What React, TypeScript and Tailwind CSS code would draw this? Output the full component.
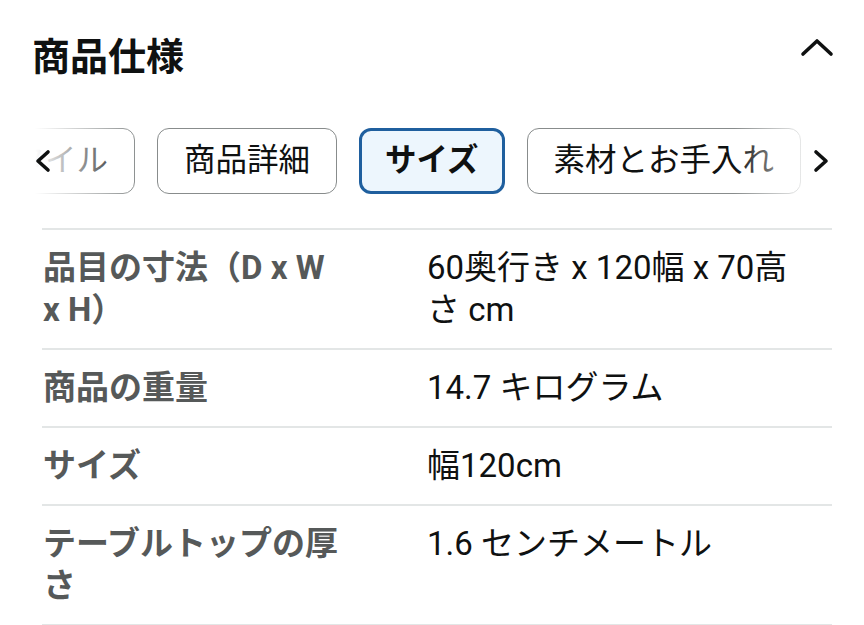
import React from "react";

const rows: { label: string; value: string }[] = [
  { label: "品目の寸法（D x W x H）", value: "60奥行き x 120幅 x 70高さ cm" },
  { label: "商品の重量", value: "14.7 キログラム" },
  { label: "サイズ", value: "幅120cm" },
  { label: "テーブルトップの厚さ", value: "1.6 センチメートル" },
];

const tabs = ["スタイル", "商品詳細", "サイズ", "素材とお手入れ", "その他"];

export default function App() {
  return (
    <div
      className="w-[864px] h-[625px] bg-white overflow-hidden text-[#0f1111]"
      style={{ fontFamily: 'Roboto, "Noto Sans CJK JP", sans-serif' }}
    >
      {/* Header */}
      <div className="flex items-center justify-between pl-[32px] pr-[30px] pt-[30px] h-[84px]">
        <h2 className="text-[38px] font-bold leading-none">商品仕様</h2>
        <svg width="34" height="20" viewBox="0 0 34 20" fill="none" className="mt-[-20px]">
          <polyline points="3,17 17,4 31,17" stroke="#0f1111" strokeWidth="3.6" strokeLinecap="round" strokeLinejoin="round" />
        </svg>
      </div>

      {/* Tabs */}
      <div className="relative mt-[44px] h-[66px] overflow-hidden">
        <div className="flex gap-[22px] ml-[-45px]">
          {tabs.map((t) => {
            const active = t === "サイズ";
            return (
              <div
                key={t}
                className={
                  active
                    ? "shrink-0 h-[66px] px-[23px] flex items-center rounded-[12px] border-[3.5px] border-[#1f5f9e] bg-[#edf6fd] text-[31.5px] font-bold"
                    : "shrink-0 h-[66px] px-[26px] flex items-center rounded-[12px] border border-[#888c8c] bg-white text-[31.5px]"
                }
              >
                {t}
              </div>
            );
          })}
        </div>
        <div className="absolute left-0 top-0 h-full w-[140px] bg-gradient-to-r from-white from-25% to-transparent flex items-center pl-[34px]">
          <svg width="18" height="24" viewBox="0 0 18 24" fill="none">
            <polyline points="14,3 4,12 14,21" stroke="#0f1111" strokeWidth="3.6" strokeLinecap="round" strokeLinejoin="round" />
          </svg>
        </div>
        <div className="absolute right-0 top-0 h-full w-[130px] bg-gradient-to-l from-white from-35% to-transparent flex items-center justify-end pr-[34px]">
          <svg width="18" height="24" viewBox="0 0 18 24" fill="none">
            <polyline points="4,3 14,12 4,21" stroke="#0f1111" strokeWidth="3.6" strokeLinecap="round" strokeLinejoin="round" />
          </svg>
        </div>
      </div>

      {/* Spec table */}
      <div className="ml-[42px] mr-[32px] mt-[34px] border-t-2 border-[#e3e6e6]">
        {rows.map((r) => (
          <div key={r.label} className="flex border-b-2 border-[#e3e6e6] py-[17px] text-[33px] leading-[42px]">
            <div className="w-[385px] shrink-0 pl-[1px]">
              <div className="w-[300px] font-bold text-[#565959]">{r.label}</div>
            </div>
            <div className="w-[380px] text-[#0f1111]">{r.value}</div>
          </div>
        ))}
      </div>
    </div>
  );
}
